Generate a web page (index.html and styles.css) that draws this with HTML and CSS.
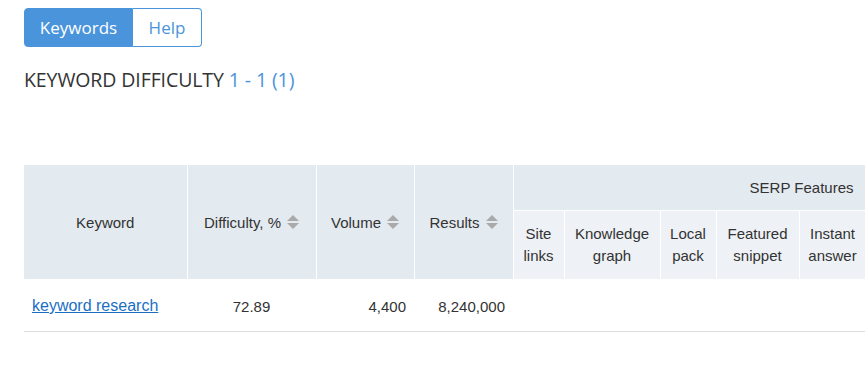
FILE: index.html
```html
<!DOCTYPE html>
<html lang="en">
<head>
    <meta charset="UTF-8">
    <meta name="viewport" content="width=device-width, initial-scale=1.0">
    <title>Keyword Difficulty</title>
    <link rel="stylesheet" href="styles.css">
</head>
<body>
    <div class="tabs">
        <button class="tab active">Keywords</button>
        <button class="tab">Help</button>
    </div>

    <h2 class="title">KEYWORD DIFFICULTY <span class="range">1 - 1 (1)</span></h2>

    <div class="table-wrap">
        <table class="results">
            <colgroup>
                <col class="c-keyword">
                <col class="c-difficulty">
                <col class="c-volume">
                <col class="c-results">
                <col class="c-site">
                <col class="c-knowledge">
                <col class="c-local">
                <col class="c-featured">
                <col class="c-instant">
            </colgroup>
            <thead>
                <tr class="top">
                    <th rowspan="2">Keyword</th>
                    <th rowspan="2"><span class="sortable">Difficulty, % <i class="sort"></i></span></th>
                    <th rowspan="2"><span class="sortable">Volume <i class="sort"></i></span></th>
                    <th rowspan="2"><span class="sortable">Results <i class="sort"></i></span></th>
                    <th colspan="5" class="serp">SERP Features</th>
                </tr>
                <tr class="sub">
                    <th>Site<br>links</th>
                    <th>Knowledge<br>graph</th>
                    <th>Local<br>pack</th>
                    <th>Featured<br>snippet</th>
                    <th>Instant<br>answer</th>
                </tr>
            </thead>
            <tbody>
                <tr>
                    <td class="kw"><a href="#">keyword research</a></td>
                    <td class="center">72.89</td>
                    <td class="num">4,400</td>
                    <td class="num">8,240,000</td>
                    <td></td>
                    <td></td>
                    <td></td>
                    <td></td>
                    <td></td>
                </tr>
            </tbody>
        </table>
    </div>
</body>
</html>
```

FILE: styles.css
```css
body {
    margin: 0;
    padding: 8px 0 0 24px;
    font-family: "Open Sans", Arial, sans-serif;
    color: #333;
    background-color: #fff;
}

.tabs {
    display: flex;
}

.tab {
    height: 39px;
    padding: 0;
    font-family: "Open Sans", Arial, sans-serif;
    font-size: 17px;
    color: #4a94dc;
    background-color: #fff;
    border: 1px solid #4a94dc;
    cursor: pointer;
}

.tab:first-child {
    width: 109px;
    border-radius: 4px 0 0 4px;
}

.tab:last-child {
    width: 69px;
    border-left: none;
    border-radius: 0 4px 4px 0;
}

.tab.active {
    color: #fff;
    background-color: #4a94dc;
}

.title {
    margin: 20px 0 0;
    font-size: 19.5px;
    font-weight: normal;
    line-height: 26px;
    letter-spacing: -0.1px;
}

.range {
    color: #4a94dc;
}

.table-wrap {
    margin-top: 72px;
    overflow: hidden;
}

.results {
    border-collapse: collapse;
    table-layout: fixed;
    width: 842px;
    font-family: "Liberation Sans", Arial, sans-serif;
    font-size: 15px;
    color: #333;
}

.c-keyword { width: 163px; }
.c-difficulty { width: 129px; }
.c-volume { width: 98px; }
.c-results { width: 99px; }
.c-site { width: 51px; }
.c-knowledge { width: 96px; }
.c-local { width: 56px; }
.c-featured { width: 83px; }
.c-instant { width: 67px; }

th {
    font-weight: normal;
    background-color: #e3eaf0;
    border: 1px solid #fff;
    border-top: none;
    text-align: center;
    padding: 0;
}

th:first-child {
    border-left: none;
}

.top th {
    height: 45px;
}

.top .serp {
    text-align: right;
    padding-right: 12px;
}

.sub th {
    height: 68px;
    line-height: 22px;
    background-color: #eef2f6;
}

.sortable {
    display: inline-flex;
    align-items: center;
    gap: 6px;
}

/* up/down arrows drawn with borders */
.sort {
    display: inline-flex;
    flex-direction: column;
    gap: 2px;
}

.sort::before,
.sort::after {
    content: "";
    width: 0;
    height: 0;
    border-left: 6px solid transparent;
    border-right: 6px solid transparent;
}

.sort::before {
    border-bottom: 6px solid #aaa;
}

.sort::after {
    border-top: 6px solid #aaa;
}

td {
    height: 50px;
    padding: 1px 8px 0;
    border-bottom: 1px solid #ddd;
}

td.center {
    text-align: center;
}

td.num {
    text-align: right;
}

td.kw a {
    font-size: 16px;
    color: #1a6fc4;
    text-decoration: underline;
}
```
